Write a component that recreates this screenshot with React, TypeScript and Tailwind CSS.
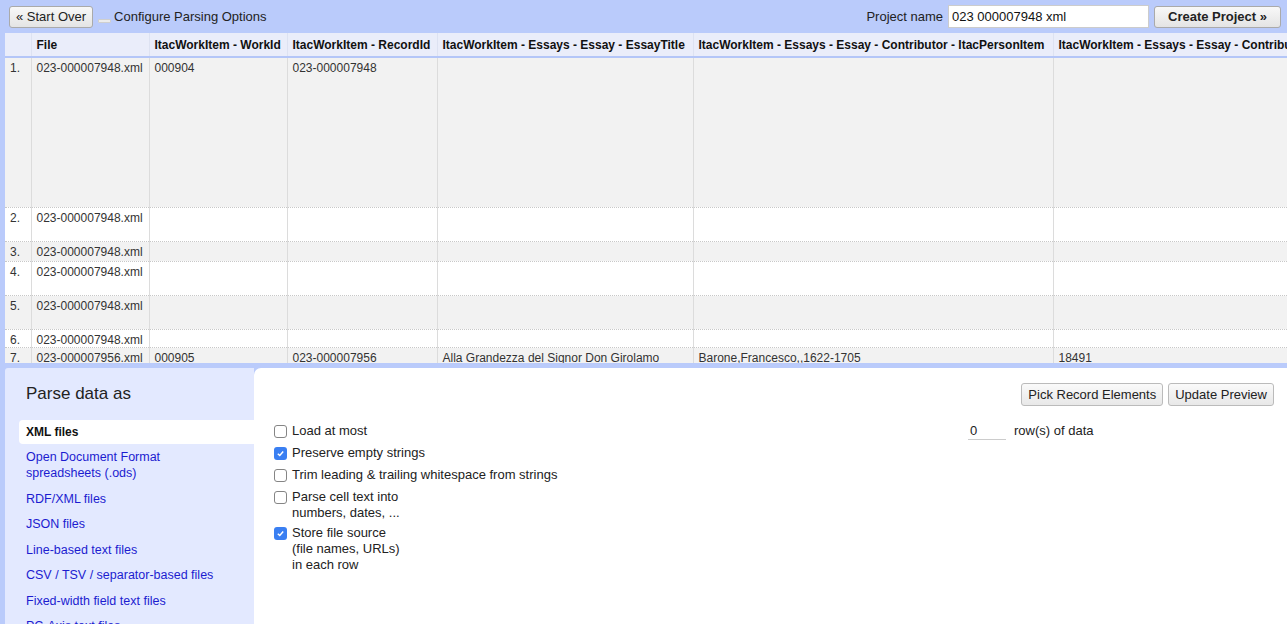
import React from "react";

const cols = [
  { w: 26, label: "" },
  { w: 118, label: "File" },
  { w: 138, label: "ItacWorkItem - WorkId" },
  { w: 150, label: "ItacWorkItem - RecordId" },
  { w: 256, label: "ItacWorkItem - Essays - Essay - EssayTitle" },
  { w: 360, label: "ItacWorkItem - Essays - Essay - Contributor - ItacPersonItem" },
  { w: 360, label: "ItacWorkItem - Essays - Essay - Contributor - ItacPersonItem - Id" },
];

const rows = [
  { h: 150, cells: ["1.", "023-000007948.xml", "000904", "023-000007948", "", "", ""] },
  { h: 34, cells: ["2.", "023-000007948.xml", "", "", "", "", ""] },
  { h: 20, cells: ["3.", "023-000007948.xml", "", "", "", "", ""] },
  { h: 34, cells: ["4.", "023-000007948.xml", "", "", "", "", ""] },
  { h: 34, cells: ["5.", "023-000007948.xml", "", "", "", "", ""] },
  { h: 18, cells: ["6.", "023-000007948.xml", "", "", "", "", ""] },
  {
    h: 18,
    cells: [
      "7.",
      "023-000007956.xml",
      "000905",
      "023-000007956",
      "Alla Grandezza del Signor Don Girolamo",
      "Barone,Francesco,,1622-1705",
      "18491",
    ],
  },
];

const formats = [
  "Open Document Format spreadsheets (.ods)",
  "RDF/XML files",
  "JSON files",
  "Line-based text files",
  "CSV / TSV / separator-based files",
  "Fixed-width field text files",
  "PC-Axis text files",
];

function Check({ on }: { on?: boolean }) {
  if (on) {
    return (
      <span className="mt-[2px] flex h-[13px] w-[13px] shrink-0 items-center justify-center rounded-[3px] bg-[#3a7ff2]">
        <svg width="9" height="9" viewBox="0 0 10 10">
          <path d="M2 5.2 L4.2 7.3 L8 2.8" fill="none" stroke="#fff" strokeWidth="1.6" />
        </svg>
      </span>
    );
  }
  return <span className="mt-[2px] h-[13px] w-[13px] shrink-0 rounded-[3px] border border-[#858585] bg-white" />;
}

function Option({ on, lines }: { on?: boolean; lines: string[] }) {
  return (
    <div className="flex min-h-[18px] gap-[5px]">
      <Check on={on} />
      <div className="leading-[16px]">
        {lines.map((l) => (
          <div key={l}>{l}</div>
        ))}
      </div>
    </div>
  );
}

export default function App() {
  return (
    <div className="h-[624px] w-[1287px] overflow-hidden bg-[#bacbfb] font-['Liberation_Sans',Arial,sans-serif] text-[13px] text-[#222]">
      {/* Top bar */}
      <div className="flex h-[33px] items-center pl-[9px] pr-[6px]">
        <button className="h-[22px] rounded-[3px] border border-[#aaa] bg-gradient-to-b from-[#f8f8f8] to-[#e4e4e4] px-[6px] text-[13px] text-[#222]">
          « Start Over
        </button>
        <span className="ml-[5px] mt-[8px] h-[4px] w-[13px] rounded-[1px] border border-[#cfcfcf] bg-[#ececec]" />
        <span className="ml-[3px]">Configure Parsing Options</span>
        <div className="flex-1" />
        <span className="mr-[5px]">Project name</span>
        <input
          className="h-[23px] w-[201px] border border-[#ccc] bg-white px-[3px] text-[13px] text-[#111] outline-none"
          defaultValue="023 000007948 xml"
        />
        <button className="ml-[5px] h-[22px] w-[127px] rounded-[3px] border border-[#aaa] bg-gradient-to-b from-[#f8f8f8] to-[#e4e4e4] text-[13px] font-bold text-[#222]">
          Create Project »
        </button>
      </div>

      {/* Preview table */}
      <div className="ml-[5px] h-[330px] overflow-hidden bg-white">
        <table className="table-fixed border-collapse text-[12px]" style={{ width: 1408 }}>
          <colgroup>
            {cols.map((c, i) => (
              <col key={i} style={{ width: c.w }} />
            ))}
          </colgroup>
          <thead>
            <tr className="h-[24px] border-b-2 border-[#b4c6f8] bg-[#eaedfa]">
              {cols.map((c, i) => (
                <th
                  key={i}
                  className="overflow-hidden whitespace-nowrap border-l border-[#dde2f2] px-[5px] text-left font-bold text-[#111] first:border-l-0"
                >
                  {c.label}
                </th>
              ))}
            </tr>
          </thead>
          <tbody>
            {rows.map((r, ri) => (
              <tr
                key={ri}
                className={`border-b border-dotted border-[#c8c8c8] ${ri % 2 === 0 ? "bg-[#f2f2f2]" : "bg-white"}`}
                style={{ height: r.h }}
              >
                {r.cells.map((v, ci) => (
                  <td
                    key={ci}
                    className="overflow-hidden whitespace-nowrap border-l border-[#dcdcdc] px-[5px] pt-[3px] align-top leading-[14px] text-[#333] first:border-l-0"
                  >
                    {v}
                  </td>
                ))}
              </tr>
            ))}
          </tbody>
        </table>
      </div>

      {/* Bottom panel */}
      <div className="mt-[5px] ml-[5px] flex h-[256px]">
        <div className="w-[249px] shrink-0 rounded-tl-[3px] bg-[#e3e9ff] pl-[14px]">
          <div className="pl-[7px] pt-[16px] text-[17px] leading-[20px] text-[#222]">Parse data as</div>
          <div className="mt-[16px] flex h-[24px] items-center rounded-l-[4px] bg-white pl-[7px] text-[12px] font-bold text-[#111]">
            XML files
          </div>
          <div className="flex flex-col gap-[9.5px] pl-[7px] pt-[5px] text-[12.5px] leading-[16px] text-[#1c1cd0]">
            {formats.map((f) => (
              <div key={f} className={f.startsWith("Open") ? "w-[160px]" : ""}>
                {f}
              </div>
            ))}
          </div>
        </div>
        <div className="flex-1 rounded-tl-[7px] bg-white pl-[20px] pr-[13px]">
          <div className="flex justify-end gap-[5px] pt-[15px]">
            <button className="h-[23px] rounded-[3px] border border-[#bbb] bg-gradient-to-b from-[#fafafa] to-[#e8e8e8] px-[6px] text-[13px] text-[#222]">
              Pick Record Elements
            </button>
            <button className="h-[23px] rounded-[3px] border border-[#bbb] bg-gradient-to-b from-[#fafafa] to-[#e8e8e8] px-[6px] text-[13px] text-[#222]">
              Update Preview
            </button>
          </div>
          <div className="mt-[17px] flex">
            <div className="flex w-[694px] flex-col gap-[4px] text-[13px] text-[#222]">
              <Option lines={["Load at most"]} />
              <Option on lines={["Preserve empty strings"]} />
              <Option lines={["Trim leading & trailing whitespace from strings"]} />
              <Option lines={["Parse cell text into", "numbers, dates, ..."]} />
              <Option on lines={["Store file source", "(file names, URLs)", "in each row"]} />
            </div>
            <div className="flex h-[17px] items-start text-[13px]">
              <span className="w-[38px] border-b border-[#ccc] pl-[2px] leading-[16px]">0</span>
              <span className="ml-[8px] leading-[16px]">row(s) of data</span>
            </div>
          </div>
        </div>
      </div>
    </div>
  );
}
